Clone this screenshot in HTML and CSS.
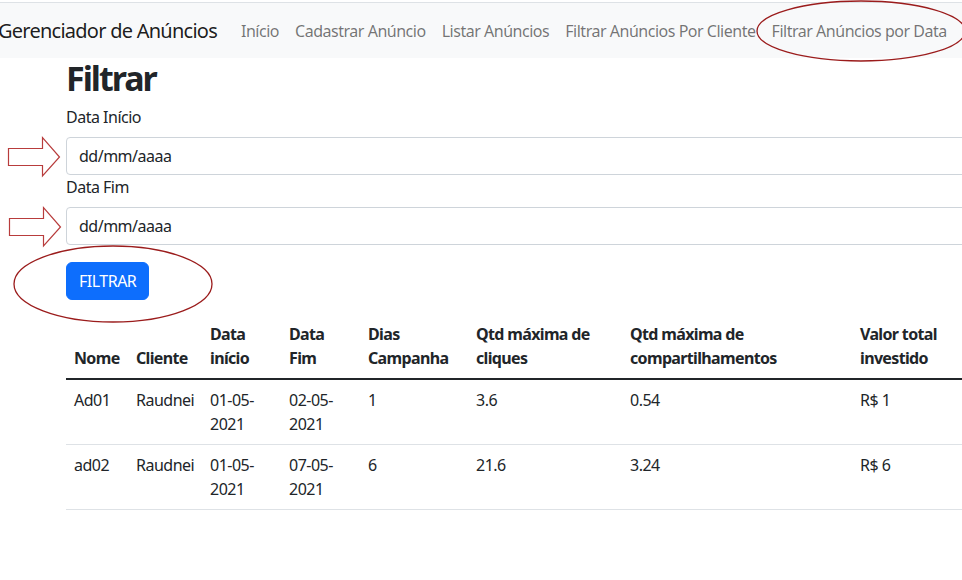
FILE: index.html
```html
<!DOCTYPE html>
<html lang="pt-BR">
<head>
<meta charset="utf-8">
<title>Gerenciador de Anúncios</title>
<link rel="stylesheet" href="styles.css">
</head>
<body>
<nav class="navbar">
  <a class="brand" href="#">Gerenciador de Anúncios</a>
  <ul class="nav-links">
    <li><a href="#">Início</a></li>
    <li><a href="#">Cadastrar Anúncio</a></li>
    <li><a href="#">Listar Anúncios</a></li>
    <li><a href="#">Filtrar Anúncios Por Cliente</a></li>
    <li><a href="#">Filtrar Anúncios por Data</a></li>
  </ul>
</nav>
<main class="container">
  <h1 class="title">Filtrar</h1>
  <form class="filter-form">
    <label class="form-label" for="inicio">Data Início</label>
    <input class="form-control" id="inicio" type="text" value="dd/mm/aaaa">
    <label class="form-label" for="fim">Data Fim</label>
    <input class="form-control" id="fim" type="text" value="dd/mm/aaaa">
    <button class="btn-primary" type="button">FILTRAR</button>
  </form>
  <table class="table">
    <colgroup>
      <col class="c1"><col class="c2"><col class="c3"><col class="c4"><col class="c5"><col class="c6"><col class="c7"><col class="c8">
    </colgroup>
    <thead>
      <tr>
        <th>Nome</th><th>Cliente</th><th>Data início</th><th>Data Fim</th><th>Dias Campanha</th><th>Qtd máxima de cliques</th><th>Qtd máxima de compartilhamentos</th><th>Valor total investido</th>
      </tr>
    </thead>
    <tbody>
      <tr><td>Ad01</td><td>Raudnei</td><td>01-05-2021</td><td>02-05-2021</td><td>1</td><td>3.6</td><td>0.54</td><td>R$ 1</td></tr>
      <tr><td>ad02</td><td>Raudnei</td><td>01-05-2021</td><td>07-05-2021</td><td>6</td><td>21.6</td><td>3.24</td><td>R$ 6</td></tr>
    </tbody>
  </table>
</main>
<svg class="annot" width="962" height="580" viewBox="0 0 962 580" aria-hidden="true">
  <ellipse cx="861" cy="31" rx="104" ry="30" fill="none" stroke="#9b1c1c" stroke-width="1.3"/>
  <ellipse cx="113" cy="284" rx="99" ry="38" fill="none" stroke="#9b1c1c" stroke-width="1.3"/>
  <polygon points="8.5,148.5 42.5,148.5 42.5,137.5 59.5,157 42.5,176 42.5,165.5 8.5,165.5" fill="none" stroke="#b83c3c" stroke-width="1.2"/>
  <polygon points="9.5,218.5 43.5,218.5 43.5,207.5 60.5,227 43.5,246 43.5,235.5 9.5,235.5" fill="none" stroke="#b83c3c" stroke-width="1.2"/>
</svg>
</body>
</html>
```
FILE: styles.css
```css
html, body {
  margin: 0;
  padding: 0;
  overflow: hidden;
}
body {
  font-family: "Noto Sans", "Open Sans", sans-serif;
  font-size: 16px;
  line-height: 1.5;
  letter-spacing: -0.5px;
  color: #212529;
  background: #fff;
  width: 962px;
  height: 580px;
  position: relative;
}
.navbar {
  margin-top: 2px;
  border-top: 1px solid #dee2e6;
  background: #f8f9fa;
  height: 55px;
  display: flex;
  align-items: center;
}
.brand {
  margin-left: -2px;
  margin-right: 16px;
  font-size: 20px;
  line-height: 30px;
  letter-spacing: -0.75px;
  color: rgba(0,0,0,.9);
  text-decoration: none;
  white-space: nowrap;
}
.nav-links {
  display: flex;
  list-style: none;
  margin: 0;
  padding: 0;
}
.nav-links a {
  display: block;
  padding: 8px;
  letter-spacing: -0.48px;
  color: rgba(0,0,0,.55);
  text-decoration: none;
  white-space: nowrap;
}
.container {
  margin-left: 66px;
  width: 1000px;
}
.title {
  margin: 0 0 6px;
  font-size: 34px;
  line-height: 1.2;
  font-weight: 700;
  letter-spacing: -2px;
}
.filter-form {
  display: flex;
  flex-direction: column;
  align-items: flex-start;
}
.form-label {
  display: block;
  margin-bottom: 8px;
}
.form-control {
  box-sizing: border-box;
  width: 100%;
  height: 38px;
  padding: 6px 12px;
  font: inherit;
  letter-spacing: -0.5px;
  color: #212529;
  border: 1px solid #ced4da;
  border-radius: 4px;
  background: #fff;
}
.btn-primary {
  margin-top: 17px;
  height: 38px;
  padding: 6px 12px;
  font: inherit;
  letter-spacing: -0.5px;
  color: #fff;
  background: #0d6efd;
  border: 1px solid #0d6efd;
  border-radius: 6px;
}
.table {
  margin-top: 14px;
  width: 916px;
  border-collapse: collapse;
  table-layout: fixed;
}
.c1 { width: 62px; }
.c2 { width: 74px; }
.c3 { width: 79px; }
.c4 { width: 79px; }
.c5 { width: 108px; }
.c6 { width: 154px; }
.c7 { width: 230px; }
.c8 { width: 130px; }
.table th, .table td {
  padding: 8px;
  text-align: left;
  border-bottom: 1px solid #dee2e6;
}
.table th {
  vertical-align: bottom;
  font-weight: 700;
  letter-spacing: -0.65px;
  border-bottom: 2px solid #212529;
}
.table td {
  vertical-align: top;
}
.annot {
  position: absolute;
  left: 0;
  top: 0;
  pointer-events: none;
}
```
